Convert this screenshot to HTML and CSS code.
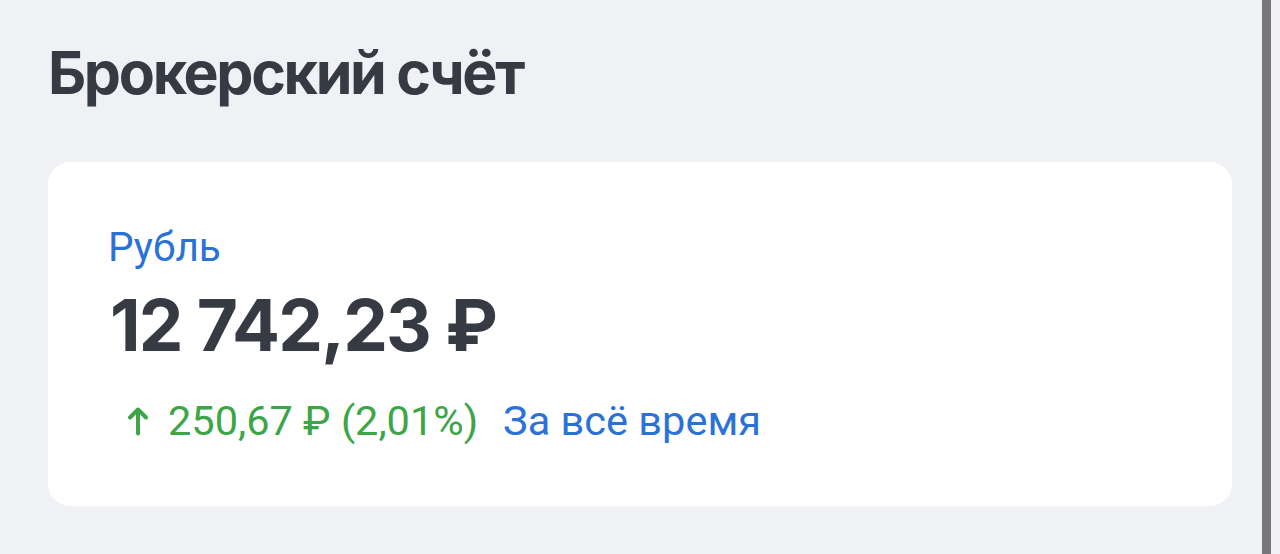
FILE: index.html
```html
<!DOCTYPE html>
<html lang="ru">
<head>
    <meta charset="UTF-8">
    <meta name="viewport" content="width=device-width, initial-scale=1.0">
    <title>Брокерский счёт</title>
    <link rel="stylesheet" href="styles.css">
</head>
<body>
    <div class="page">
        <div class="content">
            <h1 class="title">Брокерский счёт</h1>

            <div class="account-card">
                <div class="currency">Рубль</div>
                <div class="balance">12 742,23 ₽</div>
                <div class="change-row">
                    <span class="change">
                        <svg class="arrow" viewBox="0 0 22 30" width="22" height="30">
                            <path d="M11 27.5V3.5M3 11.5l8-8 8 8" fill="none" stroke="currentColor" stroke-width="4" stroke-linecap="round" stroke-linejoin="round"/>
                        </svg>
                        250,67 ₽ (2,01%)
                    </span>
                    <span class="period">За всё время</span>
                </div>
            </div>
        </div>
        <div class="scrollbar"></div>
    </div>
</body>
</html>
```

FILE: styles.css
```css
:root {
    --bg-color: #f0f1f5;
    --text-color: #363a43;
    --blue: #2b72d6;
    --green: #3ba548;
}

* {
    box-sizing: border-box;
    margin: 0;
    padding: 0;
}

body {
    font-family: 'Roboto', sans-serif;
    background-color: var(--bg-color);
    color: var(--text-color);
}

.page {
    display: flex;
    height: 554px;
}

.content {
    flex: 1;
    padding: 37px 30px 0 48px;
}

.title {
    font-family: 'Inter', sans-serif;
    font-size: 59px;
    font-weight: 700;
    line-height: 72px;
    letter-spacing: -2.3px;
}

.account-card {
    margin-top: 53px;
    background: #ffffff;
    border-radius: 22px;
    height: 344px;
    padding: 60px 60px 0;
}

.currency {
    color: var(--blue);
    font-size: 40.5px;
    line-height: 50px;
}

.balance {
    font-family: 'Inter', sans-serif;
    font-size: 71px;
    font-weight: 700;
    line-height: 86px;
    letter-spacing: -1.8px;
    margin-top: 10px;
    margin-left: 2px;
}

.change-row {
    display: flex;
    align-items: center;
    gap: 25px;
    margin-top: 28px;
    margin-left: 19px;
    font-size: 41.5px;
}

.change {
    color: var(--green);
    display: flex;
    align-items: center;
    gap: 19px;
}

.period {
    color: var(--blue);
}

.scrollbar {
    width: 9px;
    margin-right: 9px;
    background: #777779;
}
```
